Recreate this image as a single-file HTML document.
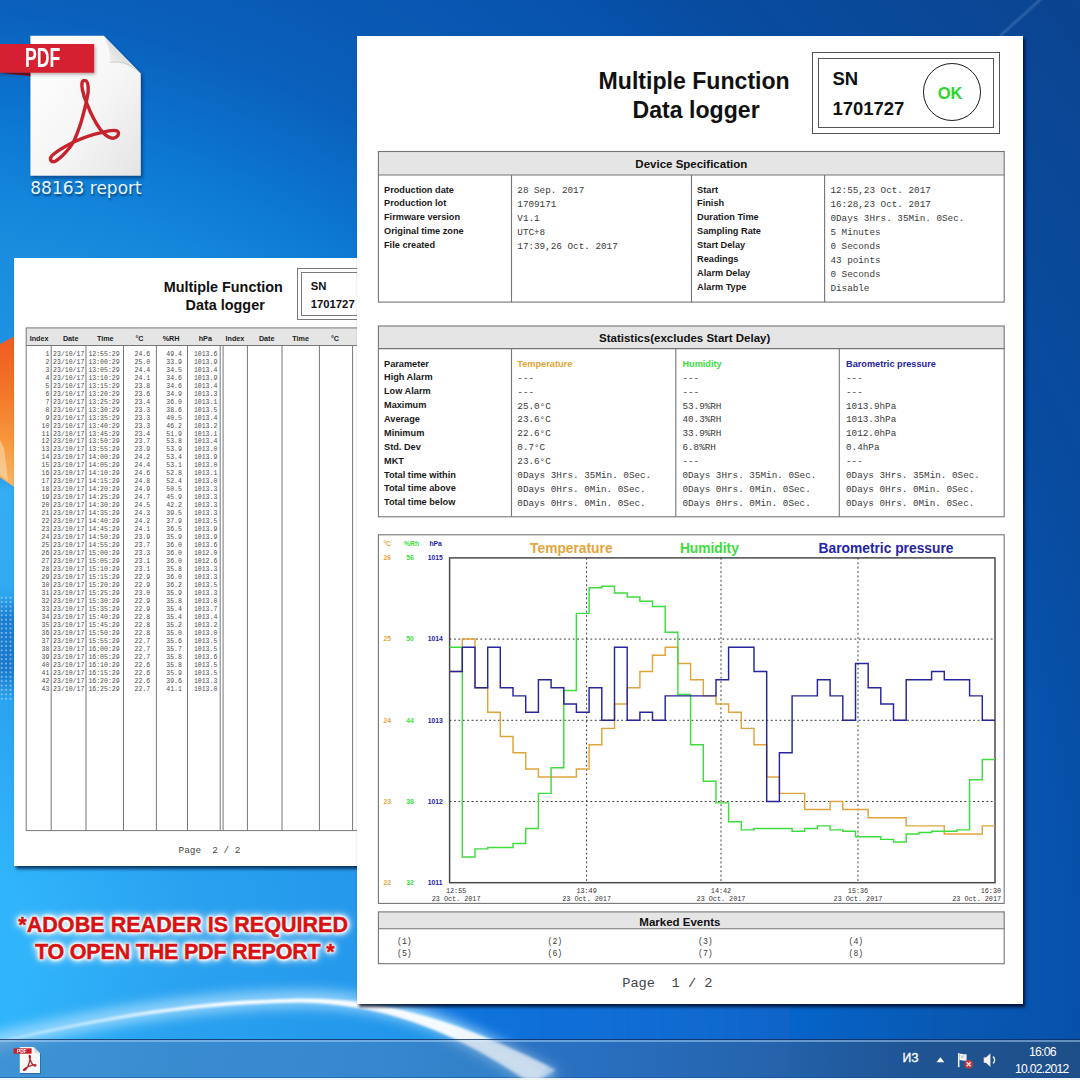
<!DOCTYPE html>
<html lang="en"><head><meta charset="utf-8"><title>88163 report</title>
<style>
*{margin:0;padding:0;box-sizing:border-box}
html,body{width:1080px;height:1080px;overflow:hidden;background:#0d55a8}
#root{position:relative;width:1080px;height:1080px;overflow:hidden;font-family:"Liberation Sans", sans-serif;color:#111}
.abs{position:absolute}
.t{position:absolute;white-space:pre}
.sans{font-family:"Liberation Sans", sans-serif}
.mono{font-family:"Liberation Mono", monospace}
.b{font-weight:bold}
.box{position:absolute;border:1px solid #7a7a7a}
.hd{position:absolute;background:#e6e6e6;border-bottom:1px solid #7a7a7a;text-align:center;font-weight:bold}
.vl{position:absolute;width:1px;background:#7a7a7a}
.lab{position:absolute;white-space:pre;font-weight:bold;font-size:9.2px;color:#1a1a1a}
.val{position:absolute;white-space:pre;font-family:"Liberation Mono", monospace;font-size:9.3px;color:#3a3a3a}
</style></head>
<body><div id="root">
<div class="abs" id="bg" style="left:0;top:0;width:1080px;height:1080px;
background:radial-gradient(circle 1550px at -100px 950px, rgb(50,186,252) 0.0%, rgb(48,180,250) 8.4%, rgb(42,162,240) 18.3%, rgb(36,152,236) 30.3%, rgb(26,140,222) 46.1%, rgb(21,136,220) 48.2%, rgb(12,120,210) 53.7%, rgb(10,96,188) 61.3%, rgb(9,88,178) 68.0%, rgb(7,83,174) 74.3%, rgb(8,76,160) 80.0%, rgb(11,68,144) 97.7%);"></div>
<div class="abs" style="left:0;top:470px;width:15px;height:140px;background:linear-gradient(180deg, rgba(64,186,248,0) 0%, rgba(64,186,248,0.6) 15%, rgba(60,182,246,0.55) 80%, rgba(60,182,246,0) 100%)"></div>
<svg class="abs" style="left:0;top:330px" width="16" height="165" viewBox="0 330 16 165">
<defs><linearGradient id="og" x1="0" y1="0" x2="0" y2="1"><stop offset="0" stop-color="#ef5a20"/><stop offset="0.35" stop-color="#f37428"/><stop offset="0.7" stop-color="#f7983e"/><stop offset="1" stop-color="#f9b868"/></linearGradient></defs>
<polygon points="0,344 16,335.6 16,488 0,477.5" fill="url(#og)"/>
<polygon points="0,440 4,448 8,481 0,475" fill="#fbdcb4" fill-opacity="0.55"/>
</svg>
<div class="abs" style="left:0;top:596px;width:15px;height:104px;background:radial-gradient(circle at 1.6px 1.6px, rgba(225,242,255,0.5) 0.8px, rgba(225,242,255,0) 1.3px) 0 0/4.4px 4.4px, linear-gradient(180deg, rgba(24,120,205,0) 0%, rgba(24,120,205,0.85) 22%, rgba(22,116,200,0.9) 70%, rgba(24,120,205,0) 100%)"></div>
<svg class="abs" style="left:0;top:0" width="1080" height="1080" viewBox="0 0 1080 1080">
<defs>
<linearGradient id="sw1" gradientUnits="userSpaceOnUse" x1="0" x2="560" y1="0" y2="0"><stop offset="0" stop-color="#fff" stop-opacity="0.35"/><stop offset="0.4" stop-color="#fff" stop-opacity="0.95"/><stop offset="0.8" stop-color="#fff" stop-opacity="0.92"/><stop offset="1" stop-color="#fff" stop-opacity="0.7"/></linearGradient>
<filter id="blur2" x="-5%" y="-50%" width="110%" height="200%"><feGaussianBlur stdDeviation="1.1"/></filter>
<filter id="blur6" x="-5%" y="-50%" width="110%" height="200%"><feGaussianBlur stdDeviation="6"/></filter>
</defs>
<linearGradient id="dz" gradientUnits="userSpaceOnUse" x1="380" x2="940" y1="0" y2="0"><stop offset="0" stop-color="rgb(22,120,224)" stop-opacity="0.9"/><stop offset="0.3" stop-color="rgb(15,108,216)" stop-opacity="0.92"/><stop offset="0.7" stop-color="rgb(11,96,202)" stop-opacity="0.7"/><stop offset="1" stop-color="rgb(10,92,196)" stop-opacity="0"/></linearGradient>
<path d="M340 996 C 400 998, 450 1017, 548 1066 L 560 1084 L 940 1084 L 940 996 Z" fill="url(#dz)" filter="url(#blur2)"/>
<path d="M-10 1043 C 100 1016, 200 1000, 300 999 C 380 998.5, 450 1018, 548 1078" fill="none" stroke="#b4e2ff" stroke-opacity="0.7" stroke-width="18" filter="url(#blur6)"/>
<path d="M-10 1043.2 C 100 1016, 200 1000, 300 998.5 C 380 998, 450 1017, 548 1066 L 532 1084 C 462 1036, 392 1004.5, 300 1002.6 C 200 1003.5, 100 1019, -10 1045.2 Z" fill="url(#sw1)" filter="url(#blur2)"/>
<path d="M1000 36 L1042 -2" fill="none" stroke="#a9c8ee" stroke-opacity="0.42" stroke-width="1.5" filter="url(#blur2)"/>
</svg>
<svg class="abs" style="left:0;top:20px" width="180" height="170" viewBox="0 20 180 170">
<defs>
<linearGradient id="pg" x1="0" y1="0" x2="1" y2="1"><stop offset="0" stop-color="#ffffff"/><stop offset="0.55" stop-color="#f6f6f6"/><stop offset="1" stop-color="#e4e4e4"/></linearGradient>
<linearGradient id="fold" x1="0" y1="1" x2="1" y2="0"><stop offset="0" stop-color="#ffffff"/><stop offset="0.5" stop-color="#dedede"/><stop offset="1" stop-color="#b4b4b4"/></linearGradient>
<filter id="ish" x="-20%" y="-20%" width="140%" height="140%"><feGaussianBlur stdDeviation="1.8"/></filter>
</defs>
<path d="M31.5 38 H105 L143 75 V178.5 H31.5 Z" fill="#042456" fill-opacity="0.5" filter="url(#ish)"/>
<path d="M30.4 35.7 H103.7 L140.8 73.5 V175.7 H30.4 Z" fill="url(#pg)"/>
<path d="M103.7 35.7 C 108.5 45, 110.8 54, 110.2 62.5 C 121 60.5, 131 64.5, 140.8 73.5 Z" fill="url(#fold)"/>
<path d="M110.2 62.5 C 121 60.5, 131 64.5, 140.8 73.5" fill="none" stroke="#9a9a9a" stroke-opacity="0.5" stroke-width="0.8"/>
<path d="M0 72.7 H30.4 V76.2 Z" fill="#7c121c"/>
<rect x="0" y="46" width="95.5" height="28.7" fill="#2a0a0a" fill-opacity="0.3" filter="url(#ish)"/>
<rect x="0" y="44" width="94.1" height="28.7" fill="#d42030"/>
<path d="M84.44,80.37 C89.07,80.37 89.07,91.30 86.76,99.63 C85.37,107.04 83.52,113.52 81.20,121.85 C78.89,129.26 76.11,136.67 73.33,142.22 C69.63,148.70 61.30,157.96 55.28,161.20 C51.11,163.06 48.80,158.89 52.04,155.65 C57.59,150.09 66.85,145.46 74.26,141.76 C82.59,138.06 91.85,134.81 100.19,132.96 C106.67,131.11 113.15,128.80 117.31,131.11 C120.56,133.43 116.85,138.98 111.76,138.06 C106.67,137.13 102.96,132.96 100.19,129.26 C95.56,122.78 90.00,111.67 86.76,103.33 C83.52,95.93 78.89,80.37 84.44,80.37 Z" fill="none" stroke="#c7232c" stroke-width="3.4" stroke-linejoin="round"/>
</svg>
<div class="t b" style="left:25.1px;top:42.7px;font-size:27px;line-height:31px;color:#fff;transform-origin:0 0;transform:scaleX(0.655)">PDF</div>
<div class="t" style="left:30.3px;top:173.9px;font-family:&quot;DejaVu Sans&quot;,sans-serif;font-size:17px;line-height:28px;color:#e9f5ff;text-shadow:1px 2px 2px rgba(0,30,80,0.6)">88163 report</div>
<div class="abs" id="page2" style="left:14px;top:258px;width:418px;height:608px;background:#fff;box-shadow:2px 3px 3px rgba(0,20,60,0.75)">
<div class="t b" style="left:149.7px;top:19.9px;font-size:14.4px;line-height:18.4px">Multiple Function</div>
<div class="t b" style="left:171.6px;top:38.3px;font-size:14.4px;line-height:18.4px">Data logger</div>
<div class="box" style="left:283.3px;top:10.3px;width:116px;height:51.7px"></div>
<div class="box" style="left:287.0px;top:13.9px;width:108.6px;height:44.6px"></div>
<div class="t b" style="left:296.7px;top:18.5px;font-size:11.3px;line-height:18.4px">SN
1701727</div>
<svg class="abs" style="left:0;top:0" width="418" height="608" viewBox="14 258 418 608"><rect x="26.2" y="327.9" width="413.8" height="17.6" fill="#e5e5e5"/><line x1="26.2" x2="440.0" y1="345.5" y2="345.5" stroke="#777" stroke-width="1"/><line x1="51.2" x2="51.2" y1="345.5" y2="830.6" stroke="#777" stroke-width="1"/><line x1="86.0" x2="86.0" y1="345.5" y2="830.6" stroke="#777" stroke-width="1"/><line x1="123.5" x2="123.5" y1="345.5" y2="830.6" stroke="#777" stroke-width="1"/><line x1="156.4" x2="156.4" y1="345.5" y2="830.6" stroke="#777" stroke-width="1"/><line x1="187.5" x2="187.5" y1="345.5" y2="830.6" stroke="#777" stroke-width="1"/><line x1="220.2" x2="220.2" y1="345.5" y2="830.6" stroke="#777" stroke-width="1"/><line x1="223.1" x2="223.1" y1="345.5" y2="830.6" stroke="#777" stroke-width="1"/><line x1="247.4" x2="247.4" y1="345.5" y2="830.6" stroke="#777" stroke-width="1"/><line x1="282.0" x2="282.0" y1="345.5" y2="830.6" stroke="#777" stroke-width="1"/><line x1="319.4" x2="319.4" y1="345.5" y2="830.6" stroke="#777" stroke-width="1"/><line x1="352.6" x2="352.6" y1="345.5" y2="830.6" stroke="#777" stroke-width="1"/><line x1="383.7" x2="383.7" y1="345.5" y2="830.6" stroke="#777" stroke-width="1"/><line x1="416.4" x2="416.4" y1="345.5" y2="830.6" stroke="#777" stroke-width="1"/><rect x="26.2" y="327.9" width="413.8" height="502.7" fill="none" stroke="#777" stroke-width="1"/></svg>
<div class="t b" style="left:5.1px;width:40px;text-align:center;top:76.1px;font-size:7.2px;line-height:10px;color:#222">Index</div>
<div class="t b" style="left:36.7px;width:40px;text-align:center;top:76.1px;font-size:7.2px;line-height:10px;color:#222">Date</div>
<div class="t b" style="left:71.3px;width:40px;text-align:center;top:76.1px;font-size:7.2px;line-height:10px;color:#222">Time</div>
<div class="t b" style="left:105.5px;width:40px;text-align:center;top:76.1px;font-size:7.2px;line-height:10px;color:#222">°C</div>
<div class="t b" style="left:137.1px;width:40px;text-align:center;top:76.1px;font-size:7.2px;line-height:10px;color:#222">%RH</div>
<div class="t b" style="left:171.3px;width:40px;text-align:center;top:76.1px;font-size:7.2px;line-height:10px;color:#222">hPa</div>
<div class="t b" style="left:200.9px;width:40px;text-align:center;top:76.1px;font-size:7.2px;line-height:10px;color:#222">Index</div>
<div class="t b" style="left:232.7px;width:40px;text-align:center;top:76.1px;font-size:7.2px;line-height:10px;color:#222">Date</div>
<div class="t b" style="left:266.7px;width:40px;text-align:center;top:76.1px;font-size:7.2px;line-height:10px;color:#222">Time</div>
<div class="t b" style="left:301.0px;width:40px;text-align:center;top:76.1px;font-size:7.2px;line-height:10px;color:#222">°C</div>
<div class="t b" style="left:333.0px;width:40px;text-align:center;top:76.1px;font-size:7.2px;line-height:10px;color:#222">%RH</div>
<div class="t b" style="left:367.0px;width:40px;text-align:center;top:76.1px;font-size:7.2px;line-height:10px;color:#222">hPa</div>
<div class="t mono" style="top:92.82px;font-size:6.5px;line-height:7.964px;color:#4a4a4a;right:382.7px;text-align:right;">1
2
3
4
5
6
7
8
9
10
11
12
13
14
15
16
17
18
19
20
21
22
23
24
25
26
27
28
29
30
31
32
33
34
35
36
37
38
39
40
41
42
43</div>
<div class="t mono" style="top:92.82px;font-size:6.5px;line-height:7.964px;color:#4a4a4a;left:39.1px;">23/10/17
23/10/17
23/10/17
23/10/17
23/10/17
23/10/17
23/10/17
23/10/17
23/10/17
23/10/17
23/10/17
23/10/17
23/10/17
23/10/17
23/10/17
23/10/17
23/10/17
23/10/17
23/10/17
23/10/17
23/10/17
23/10/17
23/10/17
23/10/17
23/10/17
23/10/17
23/10/17
23/10/17
23/10/17
23/10/17
23/10/17
23/10/17
23/10/17
23/10/17
23/10/17
23/10/17
23/10/17
23/10/17
23/10/17
23/10/17
23/10/17
23/10/17
23/10/17</div>
<div class="t mono" style="top:92.82px;font-size:6.5px;line-height:7.964px;color:#4a4a4a;left:74.4px;">12:55:29
13:00:29
13:05:29
13:10:29
13:15:29
13:20:29
13:25:29
13:30:29
13:35:29
13:40:29
13:45:29
13:50:29
13:55:29
14:00:29
14:05:29
14:10:29
14:15:29
14:20:29
14:25:29
14:30:29
14:35:29
14:40:29
14:45:29
14:50:29
14:55:29
15:00:29
15:05:29
15:10:29
15:15:29
15:20:29
15:25:29
15:30:29
15:35:29
15:40:29
15:45:29
15:50:29
15:55:29
16:00:29
16:05:29
16:10:29
16:15:29
16:20:29
16:25:29</div>
<div class="t mono" style="top:92.82px;font-size:6.5px;line-height:7.964px;color:#4a4a4a;right:281.8px;text-align:right;">24.6
25.0
24.4
24.1
23.8
23.6
23.4
23.3
23.3
23.3
23.4
23.7
23.9
24.2
24.4
24.6
24.8
24.9
24.7
24.5
24.3
24.2
24.1
23.9
23.7
23.3
23.1
23.1
22.9
22.9
23.0
22.9
22.9
22.8
22.8
22.8
22.7
22.7
22.7
22.6
22.6
22.6
22.7</div>
<div class="t mono" style="top:92.82px;font-size:6.5px;line-height:7.964px;color:#4a4a4a;right:250.1px;text-align:right;">49.4
33.9
34.5
34.6
34.6
34.9
36.0
38.6
40.5
46.2
51.9
53.8
53.9
53.4
53.1
52.8
52.4
50.5
45.9
42.2
39.5
37.9
36.5
35.9
36.0
36.0
36.0
35.8
36.0
36.2
35.9
35.8
35.4
35.4
35.2
35.0
35.6
35.7
35.8
35.8
35.9
39.6
41.1</div>
<div class="t mono" style="top:92.82px;font-size:6.5px;line-height:7.964px;color:#4a4a4a;right:214.7px;text-align:right;">1013.6
1013.9
1013.4
1013.9
1013.4
1013.3
1013.1
1013.5
1013.4
1013.2
1013.1
1013.4
1013.0
1013.9
1013.0
1013.1
1013.0
1013.3
1013.3
1013.3
1013.3
1013.5
1013.9
1013.9
1013.6
1012.0
1012.6
1013.3
1013.3
1013.5
1013.3
1013.0
1013.7
1013.4
1013.2
1013.0
1013.5
1013.5
1013.6
1013.5
1013.5
1013.3
1013.0</div>
<div class="t mono" style="left:164.5px;top:586.5px;font-size:9.4px;line-height:12px;color:#444">Page  2 / 2</div>
</div>
<div class="abs" id="page1" style="left:357px;top:36px;width:666px;height:968px;background:#fff;box-shadow:2px 3px 3px rgba(0,10,40,0.85)">
<div class="t b" style="left:241.6px;top:30.9px;font-size:23.1px;line-height:29px;color:#111">Multiple Function</div>
<div class="t b" style="left:275.6px;top:59.9px;font-size:23.1px;line-height:29px;color:#111">Data logger</div>
<div class="box" style="left:455.0px;top:16.2px;width:187.5px;height:81.8px;border-color:#555"></div>
<div class="box" style="left:460.8px;top:21.5px;width:176px;height:70.8px;border-color:#555"></div>
<div class="t b" style="left:475.4px;top:28.3px;font-size:18.5px;line-height:29.8px;color:#111">SN
1701727</div>
<div class="abs" style="left:566.4px;top:27.3px;width:57.8px;height:57.8px;border:1.8px solid #1a1a1a;border-radius:50%"></div>
<div class="t b" style="left:564.2px;width:57.8px;text-align:center;top:47.4px;font-size:16.5px;line-height:20px;color:#2ad82a">OK</div>
<svg class="abs" style="left:0;top:0" width="666" height="968" viewBox="357 36 666 968"><rect x="378.4" y="151.5" width="625.8" height="23.5" fill="#e5e5e5"/><line x1="378.4" x2="1004.2" y1="175.0" y2="175.0" stroke="#757575" stroke-width="1.1"/><line x1="511.5" x2="511.5" y1="175.0" y2="302.1" stroke="#757575" stroke-width="1.1"/><line x1="691.5" x2="691.5" y1="175.0" y2="302.1" stroke="#757575" stroke-width="1.1"/><line x1="824.6" x2="824.6" y1="175.0" y2="302.1" stroke="#757575" stroke-width="1.1"/><rect x="378.4" y="151.5" width="625.8" height="150.6" fill="none" stroke="#757575" stroke-width="1.1"/></svg>
<div class="t b" style="left:184.3px;width:300px;text-align:center;top:115.5px;font-size:11.5px;line-height:24.1px;color:#111">Device Specification</div>
<div class="lab" style="left:27.0px;top:147.53px;line-height:13.93px;">Production date
Production lot
Firmware version
Original time zone
File created</div>
<div class="val" style="left:160.3px;top:147.94px;line-height:13.93px;">28 Sep. 2017
1709171
V1.1
UTC+8
17:39,26 Oct. 2017</div>
<div class="lab" style="left:340.1px;top:147.53px;line-height:13.93px;">Start
Finish
Duration Time
Sampling Rate
Start Delay
Readings
Alarm Delay
Alarm Type</div>
<div class="val" style="left:473.4px;top:147.94px;line-height:13.93px;">12:55,23 Oct. 2017
16:28,23 Oct. 2017
0Days 3Hrs. 35Min. 0Sec.
5 Minutes
0 Seconds
43 points
0 Seconds
Disable</div>
<svg class="abs" style="left:0;top:0" width="666" height="968" viewBox="357 36 666 968"><rect x="378.4" y="326.0" width="625.8" height="22.6" fill="#e5e5e5"/><line x1="378.4" x2="1004.2" y1="348.6" y2="348.6" stroke="#757575" stroke-width="1.1"/><line x1="511.5" x2="511.5" y1="348.6" y2="516.8" stroke="#757575" stroke-width="1.1"/><line x1="675.8" x2="675.8" y1="348.6" y2="516.8" stroke="#757575" stroke-width="1.1"/><line x1="839.3" x2="839.3" y1="348.6" y2="516.8" stroke="#757575" stroke-width="1.1"/><rect x="378.4" y="326.0" width="625.8" height="190.8" fill="none" stroke="#757575" stroke-width="1.1"/></svg>
<div class="t b" style="left:177.7px;width:300px;text-align:center;top:291.4px;font-size:11.5px;line-height:23.2px;color:#111">Statistics(excludes Start Delay)</div>
<div class="lab" style="left:27.0px;top:321.56px;line-height:13.88px;">Parameter
High Alarm
Low Alarm
Maximum
Average
Minimum
Std. Dev
MKT
Total time within
Total time above
Total time below</div>
<div class="lab" style="left:160.3px;top:321.56px;line-height:13.88px;color:#e3a53a">Temperature</div>
<div class="lab" style="left:325.4px;top:321.56px;line-height:13.88px;color:#3ddc3d">Humidity</div>
<div class="lab" style="left:489.0px;top:321.56px;line-height:13.88px;color:#2424a4">Barometric pressure</div>
<div class="val" style="left:160.3px;top:335.84px;line-height:13.88px;">---
---
25.0°C
23.6°C
22.6°C
0.7°C
23.6°C
0Days 3Hrs. 35Min. 0Sec.
0Days 0Hrs. 0Min. 0Sec.
0Days 0Hrs. 0Min. 0Sec.</div>
<div class="val" style="left:325.4px;top:335.84px;line-height:13.88px;">---
---
53.9%RH
40.3%RH
33.9%RH
6.8%RH
---
0Days 3Hrs. 35Min. 0Sec.
0Days 0Hrs. 0Min. 0Sec.
0Days 0Hrs. 0Min. 0Sec.</div>
<div class="val" style="left:489.0px;top:335.84px;line-height:13.88px;">---
---
1013.9hPa
1013.3hPa
1012.0hPa
0.4hPa
---
0Days 3Hrs. 35Min. 0Sec.
0Days 0Hrs. 0Min. 0Sec.
0Days 0Hrs. 0Min. 0Sec.</div>
<svg class="abs" style="left:0;top:0" width="666" height="968" viewBox="357 36 666 968"><rect x="378.4" y="534.8" width="625.8" height="368.6" fill="none" stroke="#757575" stroke-width="1.1"/></svg>
<svg class="abs" style="left:21.4px;top:498.8px" width="625.8" height="368.6" viewBox="378.4 534.8 625.8 368.6">
<rect x="450.0" y="557.7" width="545.4" height="324.8" fill="#fff" stroke="#4a4a4a" stroke-width="1.5"/>
<line x1="450.0" x2="995.4" y1="638.9" y2="638.9" stroke="#333" stroke-width="1" stroke-dasharray="1.8 2.6"/>
<line x1="450.0" x2="995.4" y1="720.1" y2="720.1" stroke="#333" stroke-width="1" stroke-dasharray="1.8 2.6"/>
<line x1="450.0" x2="995.4" y1="801.3" y2="801.3" stroke="#333" stroke-width="1" stroke-dasharray="1.8 2.6"/>
<line x1="587.0" x2="587.0" y1="557.7" y2="882.5" stroke="#333" stroke-width="1" stroke-dasharray="1.8 2.6"/>
<line x1="721.4" x2="721.4" y1="557.7" y2="882.5" stroke="#333" stroke-width="1" stroke-dasharray="1.8 2.6"/>
<line x1="858.4" x2="858.4" y1="557.7" y2="882.5" stroke="#333" stroke-width="1" stroke-dasharray="1.8 2.6"/>
<path d="M450.0 671.4 L462.7 671.4 L462.7 638.9 L475.4 638.9 L475.4 687.6 L488.1 687.6 L488.1 712.0 L500.7 712.0 L500.7 736.3 L513.4 736.3 L513.4 752.6 L526.1 752.6 L526.1 768.8 L538.8 768.8 L538.8 776.9 L551.5 776.9 L551.5 776.9 L564.2 776.9 L564.2 776.9 L576.8 776.9 L576.8 768.8 L589.5 768.8 L589.5 744.5 L602.2 744.5 L602.2 728.2 L614.9 728.2 L614.9 703.9 L627.6 703.9 L627.6 687.6 L640.3 687.6 L640.3 671.4 L652.9 671.4 L652.9 655.1 L665.6 655.1 L665.6 647.0 L678.3 647.0 L678.3 663.3 L691.0 663.3 L691.0 679.5 L703.7 679.5 L703.7 695.7 L716.4 695.7 L716.4 703.9 L729.0 703.9 L729.0 712.0 L741.7 712.0 L741.7 728.2 L754.4 728.2 L754.4 744.5 L767.1 744.5 L767.1 776.9 L779.8 776.9 L779.8 793.2 L792.5 793.2 L792.5 793.2 L805.1 793.2 L805.1 809.4 L817.8 809.4 L817.8 809.4 L830.5 809.4 L830.5 801.3 L843.2 801.3 L843.2 809.4 L855.9 809.4 L855.9 809.4 L868.6 809.4 L868.6 817.5 L881.2 817.5 L881.2 817.5 L893.9 817.5 L893.9 817.5 L906.6 817.5 L906.6 825.7 L919.3 825.7 L919.3 825.7 L932.0 825.7 L932.0 825.7 L944.7 825.7 L944.7 833.8 L957.3 833.8 L957.3 833.8 L970.0 833.8 L970.0 833.8 L982.7 833.8 L982.7 825.7 L995.4 825.7" fill="none" stroke="#e0a43c" stroke-width="1.45" stroke-linejoin="miter"/>
<path d="M450.0 647.0 L462.7 647.0 L462.7 856.8 L475.4 856.8 L475.4 848.7 L488.1 848.7 L488.1 847.3 L500.7 847.3 L500.7 847.3 L513.4 847.3 L513.4 843.3 L526.1 843.3 L526.1 828.4 L538.8 828.4 L538.8 793.2 L551.5 793.2 L551.5 767.5 L564.2 767.5 L564.2 690.3 L576.8 690.3 L576.8 613.2 L589.5 613.2 L589.5 587.5 L602.2 587.5 L602.2 586.1 L614.9 586.1 L614.9 592.9 L627.6 592.9 L627.6 596.9 L640.3 596.9 L640.3 601.0 L652.9 601.0 L652.9 606.4 L665.6 606.4 L665.6 632.1 L678.3 632.1 L678.3 694.4 L691.0 694.4 L691.0 744.5 L703.7 744.5 L703.7 781.0 L716.4 781.0 L716.4 802.7 L729.0 802.7 L729.0 821.6 L741.7 821.6 L741.7 829.7 L754.4 829.7 L754.4 828.4 L767.1 828.4 L767.1 828.4 L779.8 828.4 L779.8 828.4 L792.5 828.4 L792.5 831.1 L805.1 831.1 L805.1 828.4 L817.8 828.4 L817.8 825.7 L830.5 825.7 L830.5 829.7 L843.2 829.7 L843.2 831.1 L855.9 831.1 L855.9 836.5 L868.6 836.5 L868.6 836.5 L881.2 836.5 L881.2 839.2 L893.9 839.2 L893.9 841.9 L906.6 841.9 L906.6 833.8 L919.3 833.8 L919.3 832.4 L932.0 832.4 L932.0 831.1 L944.7 831.1 L944.7 831.1 L957.3 831.1 L957.3 829.7 L970.0 829.7 L970.0 779.6 L982.7 779.6 L982.7 759.3 L995.4 759.3" fill="none" stroke="#3fdc3f" stroke-width="1.45" stroke-linejoin="miter"/>
<path d="M450.0 671.4 L462.7 671.4 L462.7 647.0 L475.4 647.0 L475.4 687.6 L488.1 687.6 L488.1 647.0 L500.7 647.0 L500.7 687.6 L513.4 687.6 L513.4 695.7 L526.1 695.7 L526.1 712.0 L538.8 712.0 L538.8 679.5 L551.5 679.5 L551.5 687.6 L564.2 687.6 L564.2 703.9 L576.8 703.9 L576.8 712.0 L589.5 712.0 L589.5 687.6 L602.2 687.6 L602.2 720.1 L614.9 720.1 L614.9 647.0 L627.6 647.0 L627.6 720.1 L640.3 720.1 L640.3 712.0 L652.9 712.0 L652.9 720.1 L665.6 720.1 L665.6 695.7 L678.3 695.7 L678.3 695.7 L691.0 695.7 L691.0 695.7 L703.7 695.7 L703.7 695.7 L716.4 695.7 L716.4 679.5 L729.0 679.5 L729.0 647.0 L741.7 647.0 L741.7 647.0 L754.4 647.0 L754.4 671.4 L767.1 671.4 L767.1 801.3 L779.8 801.3 L779.8 752.6 L792.5 752.6 L792.5 695.7 L805.1 695.7 L805.1 695.7 L817.8 695.7 L817.8 679.5 L830.5 679.5 L830.5 695.7 L843.2 695.7 L843.2 720.1 L855.9 720.1 L855.9 663.3 L868.6 663.3 L868.6 687.6 L881.2 687.6 L881.2 703.9 L893.9 703.9 L893.9 720.1 L906.6 720.1 L906.6 679.5 L919.3 679.5 L919.3 679.5 L932.0 679.5 L932.0 671.4 L944.7 671.4 L944.7 679.5 L957.3 679.5 L957.3 679.5 L970.0 679.5 L970.0 695.7 L982.7 695.7 L982.7 720.1 L995.4 720.1" fill="none" stroke="#26269c" stroke-width="1.45" stroke-linejoin="miter"/>
<text x="530.5" y="552.4" font-family='"Liberation Sans", sans-serif' font-weight="bold" font-size="13.8" fill="#e3a53a">Temperature</text>
<text x="680.3" y="552.4" font-family='"Liberation Sans", sans-serif' font-weight="bold" font-size="13.8" fill="#3ddc3d">Humidity</text>
<text x="819" y="552.4" font-family='"Liberation Sans", sans-serif' font-weight="bold" font-size="13.8" fill="#2424a4">Barometric pressure</text>
<text x="383.8" y="546.1" font-family='"Liberation Sans", sans-serif' font-weight="bold" font-size="6.8" fill="#e3a53a" text-anchor="start">°C</text>
<text x="404.5" y="546.1" font-family='"Liberation Sans", sans-serif' font-weight="bold" font-size="6.8" fill="#3ddc3d" text-anchor="start">%Rh</text>
<text x="429.8" y="546.1" font-family='"Liberation Sans", sans-serif' font-weight="bold" font-size="6.8" fill="#2424a4" text-anchor="start">hPa</text>
<text x="383.8" y="560.1" font-family='"Liberation Sans", sans-serif' font-weight="bold" font-size="6.8" fill="#e3a53a" text-anchor="start">26</text>
<text x="406.7" y="560.1" font-family='"Liberation Sans", sans-serif' font-weight="bold" font-size="6.8" fill="#3ddc3d" text-anchor="start">56</text>
<text x="428.2" y="560.1" font-family='"Liberation Sans", sans-serif' font-weight="bold" font-size="6.8" fill="#2424a4" text-anchor="start">1015</text>
<text x="383.8" y="641.3" font-family='"Liberation Sans", sans-serif' font-weight="bold" font-size="6.8" fill="#e3a53a" text-anchor="start">25</text>
<text x="406.7" y="641.3" font-family='"Liberation Sans", sans-serif' font-weight="bold" font-size="6.8" fill="#3ddc3d" text-anchor="start">50</text>
<text x="428.2" y="641.3" font-family='"Liberation Sans", sans-serif' font-weight="bold" font-size="6.8" fill="#2424a4" text-anchor="start">1014</text>
<text x="383.8" y="722.5" font-family='"Liberation Sans", sans-serif' font-weight="bold" font-size="6.8" fill="#e3a53a" text-anchor="start">24</text>
<text x="406.7" y="722.5" font-family='"Liberation Sans", sans-serif' font-weight="bold" font-size="6.8" fill="#3ddc3d" text-anchor="start">44</text>
<text x="428.2" y="722.5" font-family='"Liberation Sans", sans-serif' font-weight="bold" font-size="6.8" fill="#2424a4" text-anchor="start">1013</text>
<text x="383.8" y="803.7" font-family='"Liberation Sans", sans-serif' font-weight="bold" font-size="6.8" fill="#e3a53a" text-anchor="start">23</text>
<text x="406.7" y="803.7" font-family='"Liberation Sans", sans-serif' font-weight="bold" font-size="6.8" fill="#3ddc3d" text-anchor="start">38</text>
<text x="428.2" y="803.7" font-family='"Liberation Sans", sans-serif' font-weight="bold" font-size="6.8" fill="#2424a4" text-anchor="start">1012</text>
<text x="383.8" y="884.9" font-family='"Liberation Sans", sans-serif' font-weight="bold" font-size="6.8" fill="#e3a53a" text-anchor="start">22</text>
<text x="406.7" y="884.9" font-family='"Liberation Sans", sans-serif' font-weight="bold" font-size="6.8" fill="#3ddc3d" text-anchor="start">32</text>
<text x="428.2" y="884.9" font-family='"Liberation Sans", sans-serif' font-weight="bold" font-size="6.8" fill="#2424a4" text-anchor="start">1011</text>
<text x="456.5" y="892.7" font-family='"Liberation Mono", monospace' font-size="6.8" fill="#333" text-anchor="middle">12:55</text>
<text x="456.5" y="900.5" font-family='"Liberation Mono", monospace' font-size="6.8" fill="#333" text-anchor="middle">23 Oct. 2017</text>
<text x="587.0" y="892.7" font-family='"Liberation Mono", monospace' font-size="6.8" fill="#333" text-anchor="middle">13:49</text>
<text x="587.0" y="900.5" font-family='"Liberation Mono", monospace' font-size="6.8" fill="#333" text-anchor="middle">23 Oct. 2017</text>
<text x="721.4" y="892.7" font-family='"Liberation Mono", monospace' font-size="6.8" fill="#333" text-anchor="middle">14:42</text>
<text x="721.4" y="900.5" font-family='"Liberation Mono", monospace' font-size="6.8" fill="#333" text-anchor="middle">23 Oct. 2017</text>
<text x="858.4" y="892.7" font-family='"Liberation Mono", monospace' font-size="6.8" fill="#333" text-anchor="middle">15:36</text>
<text x="858.4" y="900.5" font-family='"Liberation Mono", monospace' font-size="6.8" fill="#333" text-anchor="middle">23 Oct. 2017</text>
<text x="1001.5" y="892.7" font-family='"Liberation Mono", monospace' font-size="6.8" fill="#333" text-anchor="end">16:30</text>
<text x="1001.5" y="900.5" font-family='"Liberation Mono", monospace' font-size="6.8" fill="#333" text-anchor="end">23 Oct. 2017</text>
</svg>
<svg class="abs" style="left:0;top:0" width="666" height="968" viewBox="357 36 666 968"><rect x="378.4" y="911.9" width="625.8" height="16.8" fill="#e5e5e5"/><line x1="378.4" x2="1004.2" y1="928.7" y2="928.7" stroke="#757575" stroke-width="1.1"/><rect x="378.4" y="911.9" width="625.8" height="51.8" fill="none" stroke="#757575" stroke-width="1.1"/></svg>
<div class="t b" style="left:172.9px;width:300px;text-align:center;top:877.6px;font-size:11.5px;line-height:17.4px;color:#111">Marked Events</div>
<div class="val" style="left:40.0px;top:900.2px;font-size:8.2px;line-height:12px">(1)
(5)</div>
<div class="val" style="left:190.5px;top:900.2px;font-size:8.2px;line-height:12px">(2)
(6)</div>
<div class="val" style="left:341.0px;top:900.2px;font-size:8.2px;line-height:12px">(3)
(7)</div>
<div class="val" style="left:491.5px;top:900.2px;font-size:8.2px;line-height:12px">(4)
(8)</div>
<div class="t mono" style="left:265.2px;top:940.2px;font-size:13.7px;line-height:16px;color:#444">Page  1 / 2</div>
</div>
<div class="t b" style="left:18.3px;top:911.5px;font-size:21.5px;line-height:27.3px;color:#d71212;-webkit-text-stroke:0.45px #d71212;letter-spacing:0.05px;text-shadow:0 0 1.5px #fff,0 0 2px #fff,0 0 3px #fff,0 0 3px #fff,0 0 4px #fff,0 0 5px #fff,0 0 7px #fff,0 0 9px rgba(255,255,255,0.95),0 0 12px rgba(255,255,255,0.8)">*ADOBE READER IS REQUIRED</div>
<div class="t b" style="left:35px;top:938.8px;font-size:21.5px;line-height:27.3px;color:#d71212;-webkit-text-stroke:0.45px #d71212;letter-spacing:-0.2px;text-shadow:0 0 1.5px #fff,0 0 2px #fff,0 0 3px #fff,0 0 3px #fff,0 0 4px #fff,0 0 5px #fff,0 0 7px #fff,0 0 9px rgba(255,255,255,0.95),0 0 12px rgba(255,255,255,0.8)">TO OPEN THE PDF REPORT *</div>
<div class="abs" id="taskbar" style="left:0;top:1039px;width:1080px;height:41px">
<div class="abs" style="left:0;top:1px;width:1080px;height:38.5px;background:linear-gradient(90deg, rgba(70,128,190,0.62) 0%, rgba(66,124,188,0.6) 35%, rgba(56,112,178,0.62) 55%, rgba(46,98,160,0.72) 72%, rgba(36,84,142,0.84) 84%, rgba(32,78,132,0.9) 100%)"></div>
<div class="abs" style="left:0;top:0;width:1080px;height:1px;background:rgba(16,44,92,0.8)"></div>
<div class="abs" style="left:0;top:1px;width:1080px;height:1.6px;background:rgba(170,210,245,0.5)"></div>
<div class="abs" style="left:0;top:37.6px;width:1080px;height:1.6px;background:rgba(20,70,140,0.45)"></div>
<div class="abs" style="left:0;top:39.2px;width:1080px;height:1.8px;background:#eef6fb"></div>
</div>
<svg class="abs" style="left:400px;top:1040px" width="180" height="39" viewBox="400 1040 180 39">
<defs><filter id="blur3" x="-20%" y="-50%" width="140%" height="200%"><feGaussianBlur stdDeviation="1.6"/></filter>
<filter id="blur8" x="-20%" y="-50%" width="140%" height="200%"><feGaussianBlur stdDeviation="7"/></filter></defs>
<path d="M300 998.5 C 380 998, 450 1017, 560 1072 L 540 1094 C 462 1036, 392 1004.5, 300 1002.6 Z" fill="#cfe6fa" fill-opacity="0.35" filter="url(#blur8)"/>
<path d="M300 998.5 C 380 998, 450 1017, 556 1070 L 532 1084 C 462 1036, 392 1004.5, 300 1002.6 Z" fill="#ffffff" fill-opacity="0.5" filter="url(#blur3)"/>
</svg>
<div class="t" style="left:902.6px;top:1049.6px;font-size:12.2px;line-height:16px;color:#fff;-webkit-text-stroke:0.3px #fff">ИЗ</div>
<div class="t" style="left:1029px;top:1044px;font-size:12.2px;line-height:16px;color:#fff;letter-spacing:-0.75px">16:06</div>
<div class="t" style="left:1015px;top:1061px;font-size:12.2px;line-height:16px;color:#fff;letter-spacing:-0.75px">10.02.2012</div>
<svg class="abs" style="left:930px;top:1046px" width="80" height="26" viewBox="930 1046 80 26">
<path d="M936.5 1062.3 L940.4 1057.3 L944.3 1062.3 Z" fill="#fff"/>
<path d="M958.7 1053 V1067.2" stroke="#f4f4f4" stroke-width="1.5" fill="none"/>
<path d="M959.4 1053.9 C961.6 1053.2,963.4 1054.9,966.6 1054.2 V1060.6 C963.4 1061.4,961.6 1059.7,959.4 1060.4 Z" fill="#f0f0f0"/>
<path d="M961.2 1055.6 h2.4 v2.2 h-2.4 z" fill="#9db4d0" fill-opacity="0.7"/>
<circle cx="968.7" cy="1064.2" r="4.3" fill="#c23a3a"/>
<path d="M966.7 1062.2 L970.7 1066.2 M970.7 1062.2 L966.7 1066.2" stroke="#ffd9d9" stroke-width="1.4"/>
<path d="M983.6 1057.2 H986 L990.6 1053 V1067.2 L986 1063 H983.6 Z" fill="#f2f2f2" stroke="#1a3560" stroke-opacity="0.5" stroke-width="0.6"/>
<path d="M993 1056.6 C995.2 1058.6,995.2 1061.6,993 1063.6" stroke="#f2f2f2" stroke-width="1.3" fill="none"/>
</svg>
<svg class="abs" style="left:10px;top:1044px" width="36" height="34" viewBox="10 1044 36 34">
<path d="M20.6 1047.9 H34.5 L40.8 1054.2 V1074 H20.6 Z" fill="#123a6a" fill-opacity="0.45"/>
<path d="M19.8 1046.9 H33.7 L40 1053.3 V1073.1 H19.8 Z" fill="#f7f7f7"/>
<path d="M33.7 1046.9 C34.6 1049.4,34.9 1051.3,34.7 1052.7 C36.6 1052.3,38.4 1052.6,40 1053.3 Z" fill="#cfd6de"/>
<rect x="13.6" y="1048.3" width="18" height="5.4" fill="#cc1f2c"/>
<path d="M29.69,1055.25 C30.54,1055.25 30.54,1057.29 30.11,1058.85 C29.86,1060.24 29.52,1061.45 29.10,1063.01 C28.67,1064.39 28.16,1065.78 27.66,1066.82 C26.98,1068.03 25.45,1069.76 24.35,1070.37 C23.59,1070.71 23.17,1069.93 23.76,1069.33 C24.78,1068.29 26.47,1067.42 27.83,1066.73 C29.35,1066.04 31.05,1065.43 32.57,1065.08 C33.76,1064.74 34.94,1064.31 35.70,1064.74 C36.30,1065.17 35.62,1066.21 34.69,1066.04 C33.76,1065.86 33.08,1065.08 32.57,1064.39 C31.72,1063.18 30.71,1061.10 30.11,1059.54 C29.52,1058.16 28.67,1055.25 29.69,1055.25 Z" fill="none" stroke="#b3202a" stroke-width="1.25" stroke-linejoin="round"/>
</svg>
<div class="t b" style="left:17px;top:1048.1px;font-size:5.6px;line-height:6.2px;color:#fff;transform-origin:0 0;transform:scaleX(0.85)">PDF</div>
</div></body></html>
